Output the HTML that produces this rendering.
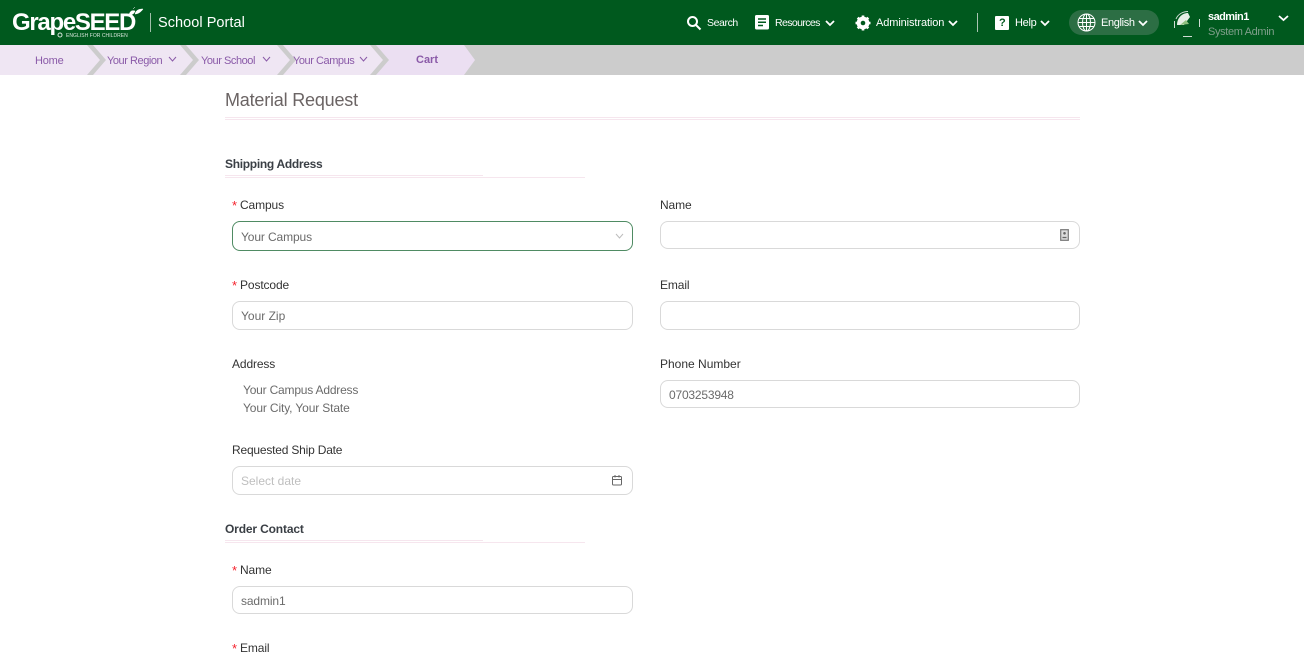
<!DOCTYPE html>
<html><head><meta charset="utf-8"><title>Material Request</title>
<style>
html,body{margin:0;padding:0;background:#fff;width:1304px;height:665px;overflow:hidden}
body{font-family:"Liberation Sans",sans-serif;font-size:12px;color:#333;position:relative}
.t{position:absolute;white-space:nowrap;line-height:16px}
.box{position:absolute;box-sizing:border-box;border:1px solid #d9d9d9;border-radius:8px;background:#fff}
.lbl{color:#333;font-size:12px;letter-spacing:-.12px}
.val{color:#6b6b6b;font-size:12px;letter-spacing:-.12px}
.req{color:#f5222d;font-size:13px}
.w{color:#fff}
.bc{color:#8a5aa8;font-size:11px;letter-spacing:-.45px}
.nav{font-size:10.5px;letter-spacing:-.4px}
.line{position:absolute;height:1px;background:#f6e6ee}
svg{position:absolute;overflow:visible}
</style></head><body>
<div style="position:absolute;left:0;top:0;width:1304px;height:45px;background:#00591e"></div>
<div style="position:absolute;left:0;top:45px;width:1304px;height:30px;background:#ccc"></div>

<svg style="left:0;top:45px" width="480" height="30">
<polygon points="0,0 87,0 100,15 87,30 0,30" fill="#efe6f3"/>
<polygon points="93,0 180,0 193,15 180,30 93,30 106,15" fill="#efe6f3"/>
<polygon points="186,0 277,0 290,15 277,30 186,30 199,15" fill="#efe6f3"/>
<polygon points="283,0 370,0 383,15 370,30 283,30 296,15" fill="#efe6f3"/>
<polygon points="376,0 464,0 475,15 464,30 376,30 389,15" fill="#ebdff2"/>
<g fill="none" stroke="#8a5aa8" stroke-width="1">
<path d="M169 12l3.500 4 3.500-4"/><path d="M263 12l3.500 4 3.500-4"/><path d="M360 12l3.500 4 3.500-4"/>
</g></svg>
<div class="t bc" style="left:35px;top:53px;letter-spacing:-.2px">Home</div>
<div class="t bc" style="left:107px;top:53px">Your Region</div>
<div class="t bc" style="left:201px;top:53px">Your School</div>
<div class="t bc" style="left:293px;top:53px">Your Campus</div>
<div class="t bc" style="left:416px;top:52px;font-weight:bold;letter-spacing:0">Cart</div>

<div class="t w" style="left:12px;top:10px;font-size:24px;line-height:26px;font-weight:bold;letter-spacing:-1.300px">GrapeSEED</div>
<svg style="left:128px;top:6px" width="16" height="12"><path d="M1 9C4 9 6 8 7 5 4 4 2 5 1 9ZM7 8C10 8 13 6 15 3 11 3 8 4 7 8ZM5 3 7 1" fill="#fff" stroke="#fff" stroke-width=".5"/></svg>
<svg style="left:57px;top:32px" width="6" height="6" fill="none" stroke="#d7e5db"><circle cx="3" cy="3" r="2"/></svg>
<div class="t" style="left:66px;top:32px;font-size:5px;line-height:8px;color:#d7e5db;letter-spacing:.05px">ENGLISH FOR CHILDREN</div>
<div style="position:absolute;left:150px;top:13px;width:1px;height:19px;background:#9fbfa9"></div>
<div class="t w" style="left:158px;top:14px;font-size:14.500px;line-height:18px;letter-spacing:.05px">School Portal</div>

<svg style="left:686px;top:15px" width="16" height="16" fill="none" stroke="#fff" stroke-width="2"><circle cx="6.500" cy="6.500" r="4.500"/><path d="M10 10l4.500 4.500"/></svg>
<div class="t w nav" style="left:707px;top:15px">Search</div>
<svg style="left:755px;top:15px" width="14" height="15"><rect width="14" height="14.500" rx="1.500" fill="#fff"/><path d="M3 4h8M3 7.300h8M3 10.500h5" stroke="#00591e" stroke-width="1.500"/></svg>
<div class="t w nav" style="left:775px;top:15px;letter-spacing:-.6px">Resources</div>
<svg style="left:825px;top:20px" width="10" height="7" fill="none" stroke="#fff" stroke-width="1.800"><path d="M1 1l4 4 4-4"/></svg>
<svg style="left:855px;top:15px" width="16" height="16"><circle cx="8" cy="8" r="4.700" fill="none" stroke="#fff" stroke-width="3.400"/><path d="M8 .5V15.500M.5 8H15.500M2.700 2.700 13.300 13.300M13.300 2.700 2.700 13.300" stroke="#fff" stroke-width="2.600"/><circle cx="8" cy="8" r="2.300" fill="#00591e"/></svg>
<div class="t w" style="left:876px;top:15px;font-size:11px;letter-spacing:-.1px">Administration</div>
<svg style="left:948px;top:20px" width="10" height="7" fill="none" stroke="#fff" stroke-width="1.800"><path d="M1 1l4 4 4-4"/></svg>
<div style="position:absolute;left:977px;top:13px;width:1px;height:19px;background:#a9c5b2"></div>
<svg style="left:995px;top:16px" width="14" height="14"><rect width="14" height="14" rx="1" fill="#fff"/></svg>
<div class="t" style="left:999px;top:15px;font-size:11px;font-weight:bold;color:#00591e">?</div>
<div class="t w" style="left:1015px;top:15px;font-size:11px;letter-spacing:-.3px">Help</div>
<svg style="left:1040px;top:20px" width="10" height="7" fill="none" stroke="#fff" stroke-width="1.800"><path d="M1 1l4 4 4-4"/></svg>
<div style="position:absolute;left:1069px;top:10px;width:90px;height:25px;border-radius:13px;background:#2c6e44"></div>
<svg style="left:1077px;top:13px" width="19" height="19" fill="none" stroke="#fff" stroke-width="1"><circle cx="9.500" cy="9.500" r="8.500"/><ellipse cx="9.500" cy="9.500" rx="4" ry="8.500"/><path d="M9.500 1V18M1 9.500H18M2.200 5.500H16.800M2.200 13.500H16.800"/></svg>
<div class="t w" style="left:1101px;top:15px;font-size:11px;letter-spacing:-.35px">English</div>
<svg style="left:1138px;top:20px" width="10" height="7" fill="none" stroke="#fff" stroke-width="1.800"><path d="M1 1l4 4 4-4"/></svg>
<svg style="left:1174px;top:11px" width="26" height="26"><path d="M3 14C3 7 8 2 14 2L16 6 10 14Z" fill="#e7efe6"/><path d="M6 14 12 9 15 13Z" fill="#8fc07f"/><path d="M14 .5C9 .5 4 3 2 8M.5 10V17M25.500 8V16M9 25.500H18" stroke="#cfdcd3" fill="none"/></svg>
<div class="t w" style="left:1208px;top:9px;font-size:11px;font-weight:bold;letter-spacing:-.55px">sadmin1</div>
<div class="t" style="left:1208px;top:24px;font-size:11px;color:#7f9f8b;letter-spacing:-.35px">System Admin</div>
<svg style="left:1278px;top:15px" width="11" height="7" fill="none" stroke="#fff" stroke-width="1.800"><path d="M1 1l4.500 4 4.500-4"/></svg>

<div class="t" style="left:225px;top:89px;font-size:18px;line-height:22px;color:#6b6464;letter-spacing:-.2px">Material Request</div>
<div class="line" style="left:225px;top:117px;width:855px"></div>
<div class="line" style="left:225px;top:119px;width:855px"></div>

<div class="t" style="left:225px;top:156px;font-size:12px;font-weight:bold;color:#3a3f45;letter-spacing:-.3px">Shipping Address</div>
<div class="line" style="left:225px;top:175px;width:258px"></div>
<div class="line" style="left:225px;top:177px;width:360px"></div>

<div class="t req" style="left:232px;top:198px">*</div><div class="t lbl" style="left:240px;top:197px">Campus</div>
<div class="box" style="left:232px;top:221px;width:401px;height:30px;border-color:#4f8b63"></div>
<div class="t val" style="left:241px;top:229px">Your Campus</div>
<svg style="left:615px;top:233px" width="9" height="6" fill="none" stroke="#bdbdbd"><path d="M1 1l3.500 4L8 1"/></svg>

<div class="t lbl" style="left:660px;top:197px">Name</div>
<div class="box" style="left:660px;top:221px;width:420px;height:28px"></div>
<svg style="left:1060px;top:229px" width="9" height="12"><rect x=".7" y=".7" width="7.600" height="10.600" fill="#ddd" stroke="#777" stroke-width="1.200"/><circle cx="4.500" cy="4.300" r="1.300" fill="#666"/><path d="M2.500 8.500h4" stroke="#666" stroke-width="1.300"/></svg>

<div class="t req" style="left:232px;top:278px">*</div><div class="t lbl" style="left:240px;top:277px">Postcode</div>
<div class="box" style="left:232px;top:301px;width:401px;height:29px"></div>
<div class="t val" style="left:241px;top:308px;letter-spacing:0">Your Zip</div>

<div class="t lbl" style="left:660px;top:277px">Email</div>
<div class="box" style="left:660px;top:301px;width:420px;height:29px"></div>

<div class="t lbl" style="left:232px;top:356px">Address</div>
<div class="t val" style="left:243px;top:382px;letter-spacing:-.2px">Your Campus Address</div>
<div class="t val" style="left:243px;top:400px;letter-spacing:-.13px">Your City, Your State</div>

<div class="t lbl" style="left:660px;top:356px;letter-spacing:0">Phone Number</div>
<div class="box" style="left:660px;top:380px;width:420px;height:28px"></div>
<div class="t val" style="left:669px;top:387px;letter-spacing:-.2px">0703253948</div>

<div class="t lbl" style="left:232px;top:442px;letter-spacing:-.2px">Requested Ship Date</div>
<div class="box" style="left:232px;top:466px;width:401px;height:29px"></div>
<div class="t" style="left:241px;top:473px;color:#bfbfbf">Select date</div>
<svg style="left:612px;top:475px" width="10" height="11" fill="none" stroke="#666"><rect x=".5" y="1.500" width="9" height="8.500" rx="1"/><path d="M.5 4.500h9M3 0v2.500M7 0v2.500"/></svg>

<div class="t" style="left:225px;top:521px;font-size:12px;font-weight:bold;color:#3a3f45;letter-spacing:-.15px">Order Contact</div>
<div class="line" style="left:225px;top:540px;width:258px"></div>
<div class="line" style="left:225px;top:542px;width:360px"></div>

<div class="t req" style="left:232px;top:563px">*</div><div class="t lbl" style="left:240px;top:562px">Name</div>
<div class="box" style="left:232px;top:586px;width:401px;height:28px"></div>
<div class="t val" style="left:241px;top:593px">sadmin1</div>

<div class="t req" style="left:232px;top:641px">*</div><div class="t lbl" style="left:240px;top:640px">Email</div>
</body></html>
